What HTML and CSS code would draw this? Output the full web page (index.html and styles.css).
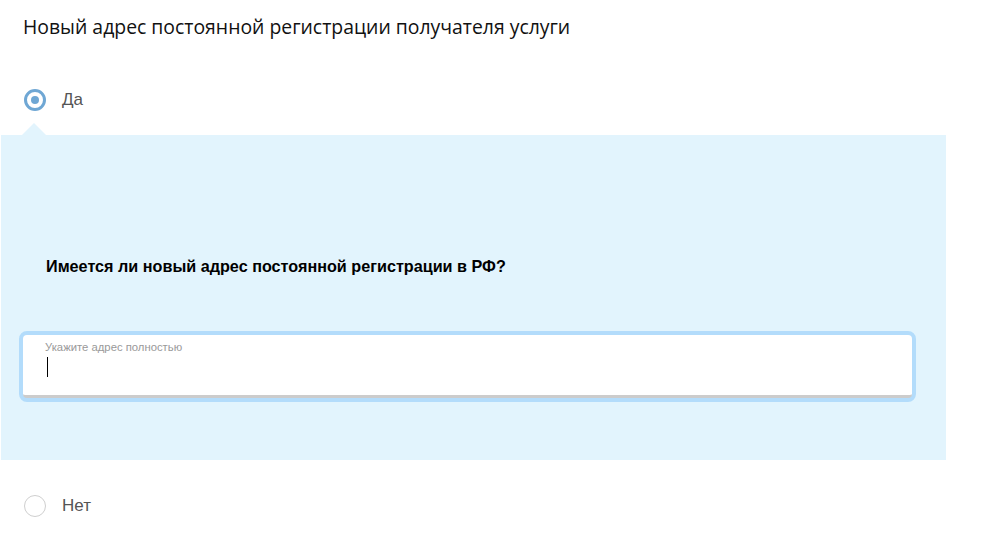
FILE: index.html
```html
<!DOCTYPE html>
<html lang="ru">
<head>
<meta charset="utf-8">
<title>Новый адрес</title>
<link rel="stylesheet" href="styles.css">
</head>
<body>
<h1 class="title">Новый адрес постоянной регистрации получателя услуги</h1>
<div class="option option-yes">
  <span class="radio radio-checked"><span class="radio-dot"></span></span>
  <span class="option-label">Да</span>
</div>
<div class="panel">
  <p class="question">Имеется ли новый адрес постоянной регистрации в РФ?</p>
  <div class="field">
    <div class="field-inner">
      <div class="field-label">Укажите адрес полностью</div>
      <span class="caret"></span>
    </div>
  </div>
</div>
<div class="option option-no">
  <span class="radio"></span>
  <span class="option-label">Нет</span>
</div>
</body>
</html>
```
FILE: styles.css
```css
html, body {
  margin: 0;
  padding: 0;
  background: #ffffff;
}
body {
  width: 995px;
  height: 542px;
  overflow: hidden;
  font-family: "Liberation Sans", Arial, sans-serif;
}
.title {
  margin: 0;
  padding: 13px 0 0 23px;
  height: 48px;
  font-family: "Open Sans", "Noto Sans", sans-serif;
  font-weight: 400;
  font-size: 19.4px;
  line-height: 28px;
  color: #111111;
}
.option {
  display: flex;
  align-items: center;
  gap: 16px;
  padding-left: 24px;
  height: 22px;
}
.option-yes {
  margin-top: 28px;
}
.option-no {
  margin-top: 35px;
}
.radio {
  box-sizing: border-box;
  width: 22px;
  height: 22px;
  border-radius: 50%;
  border: 1px solid #cfcfcf;
  background: #ffffff;
  display: flex;
  align-items: center;
  justify-content: center;
  flex: none;
}
.radio-checked {
  border: 3px solid #6fa7d4;
}
.radio-dot {
  width: 8px;
  height: 8px;
  border-radius: 50%;
  background: #6fa7d4;
}
.option-label {
  font-size: 17px;
  line-height: 22px;
  color: #555555;
}
.panel {
  position: relative;
  box-sizing: border-box;
  margin: 24px 0 0 1px;
  width: 945px;
  height: 325px;
  background: #e2f4fd;
  padding-top: 121px;
}
.panel::before {
  content: "";
  position: absolute;
  top: -12px;
  left: 21px;
  width: 0;
  height: 0;
  border-left: 12px solid transparent;
  border-right: 12px solid transparent;
  border-bottom: 12px solid #e2f4fd;
}
.question {
  margin: 0 0 0 45px;
  font-weight: 700;
  font-size: 16.2px;
  line-height: 20px;
  color: #000000;
}
.field {
  box-sizing: border-box;
  margin: 55px 0 0 18px;
  width: 897px;
  border: 4px solid #b3dcfb;
  border-radius: 8px;
  background: #b3dcfb;
}
.field-inner {
  box-sizing: border-box;
  height: 63px;
  background: #ffffff;
  border-bottom: 3px solid #cccccc;
  border-radius: 4px;
  padding: 6px 0 0 22px;
}
.field-label {
  font-size: 11.3px;
  line-height: 13px;
  color: #999999;
}
.caret {
  display: block;
  margin: 3px 0 0 2px;
  width: 1px;
  height: 20px;
  background: #000000;
}
```
